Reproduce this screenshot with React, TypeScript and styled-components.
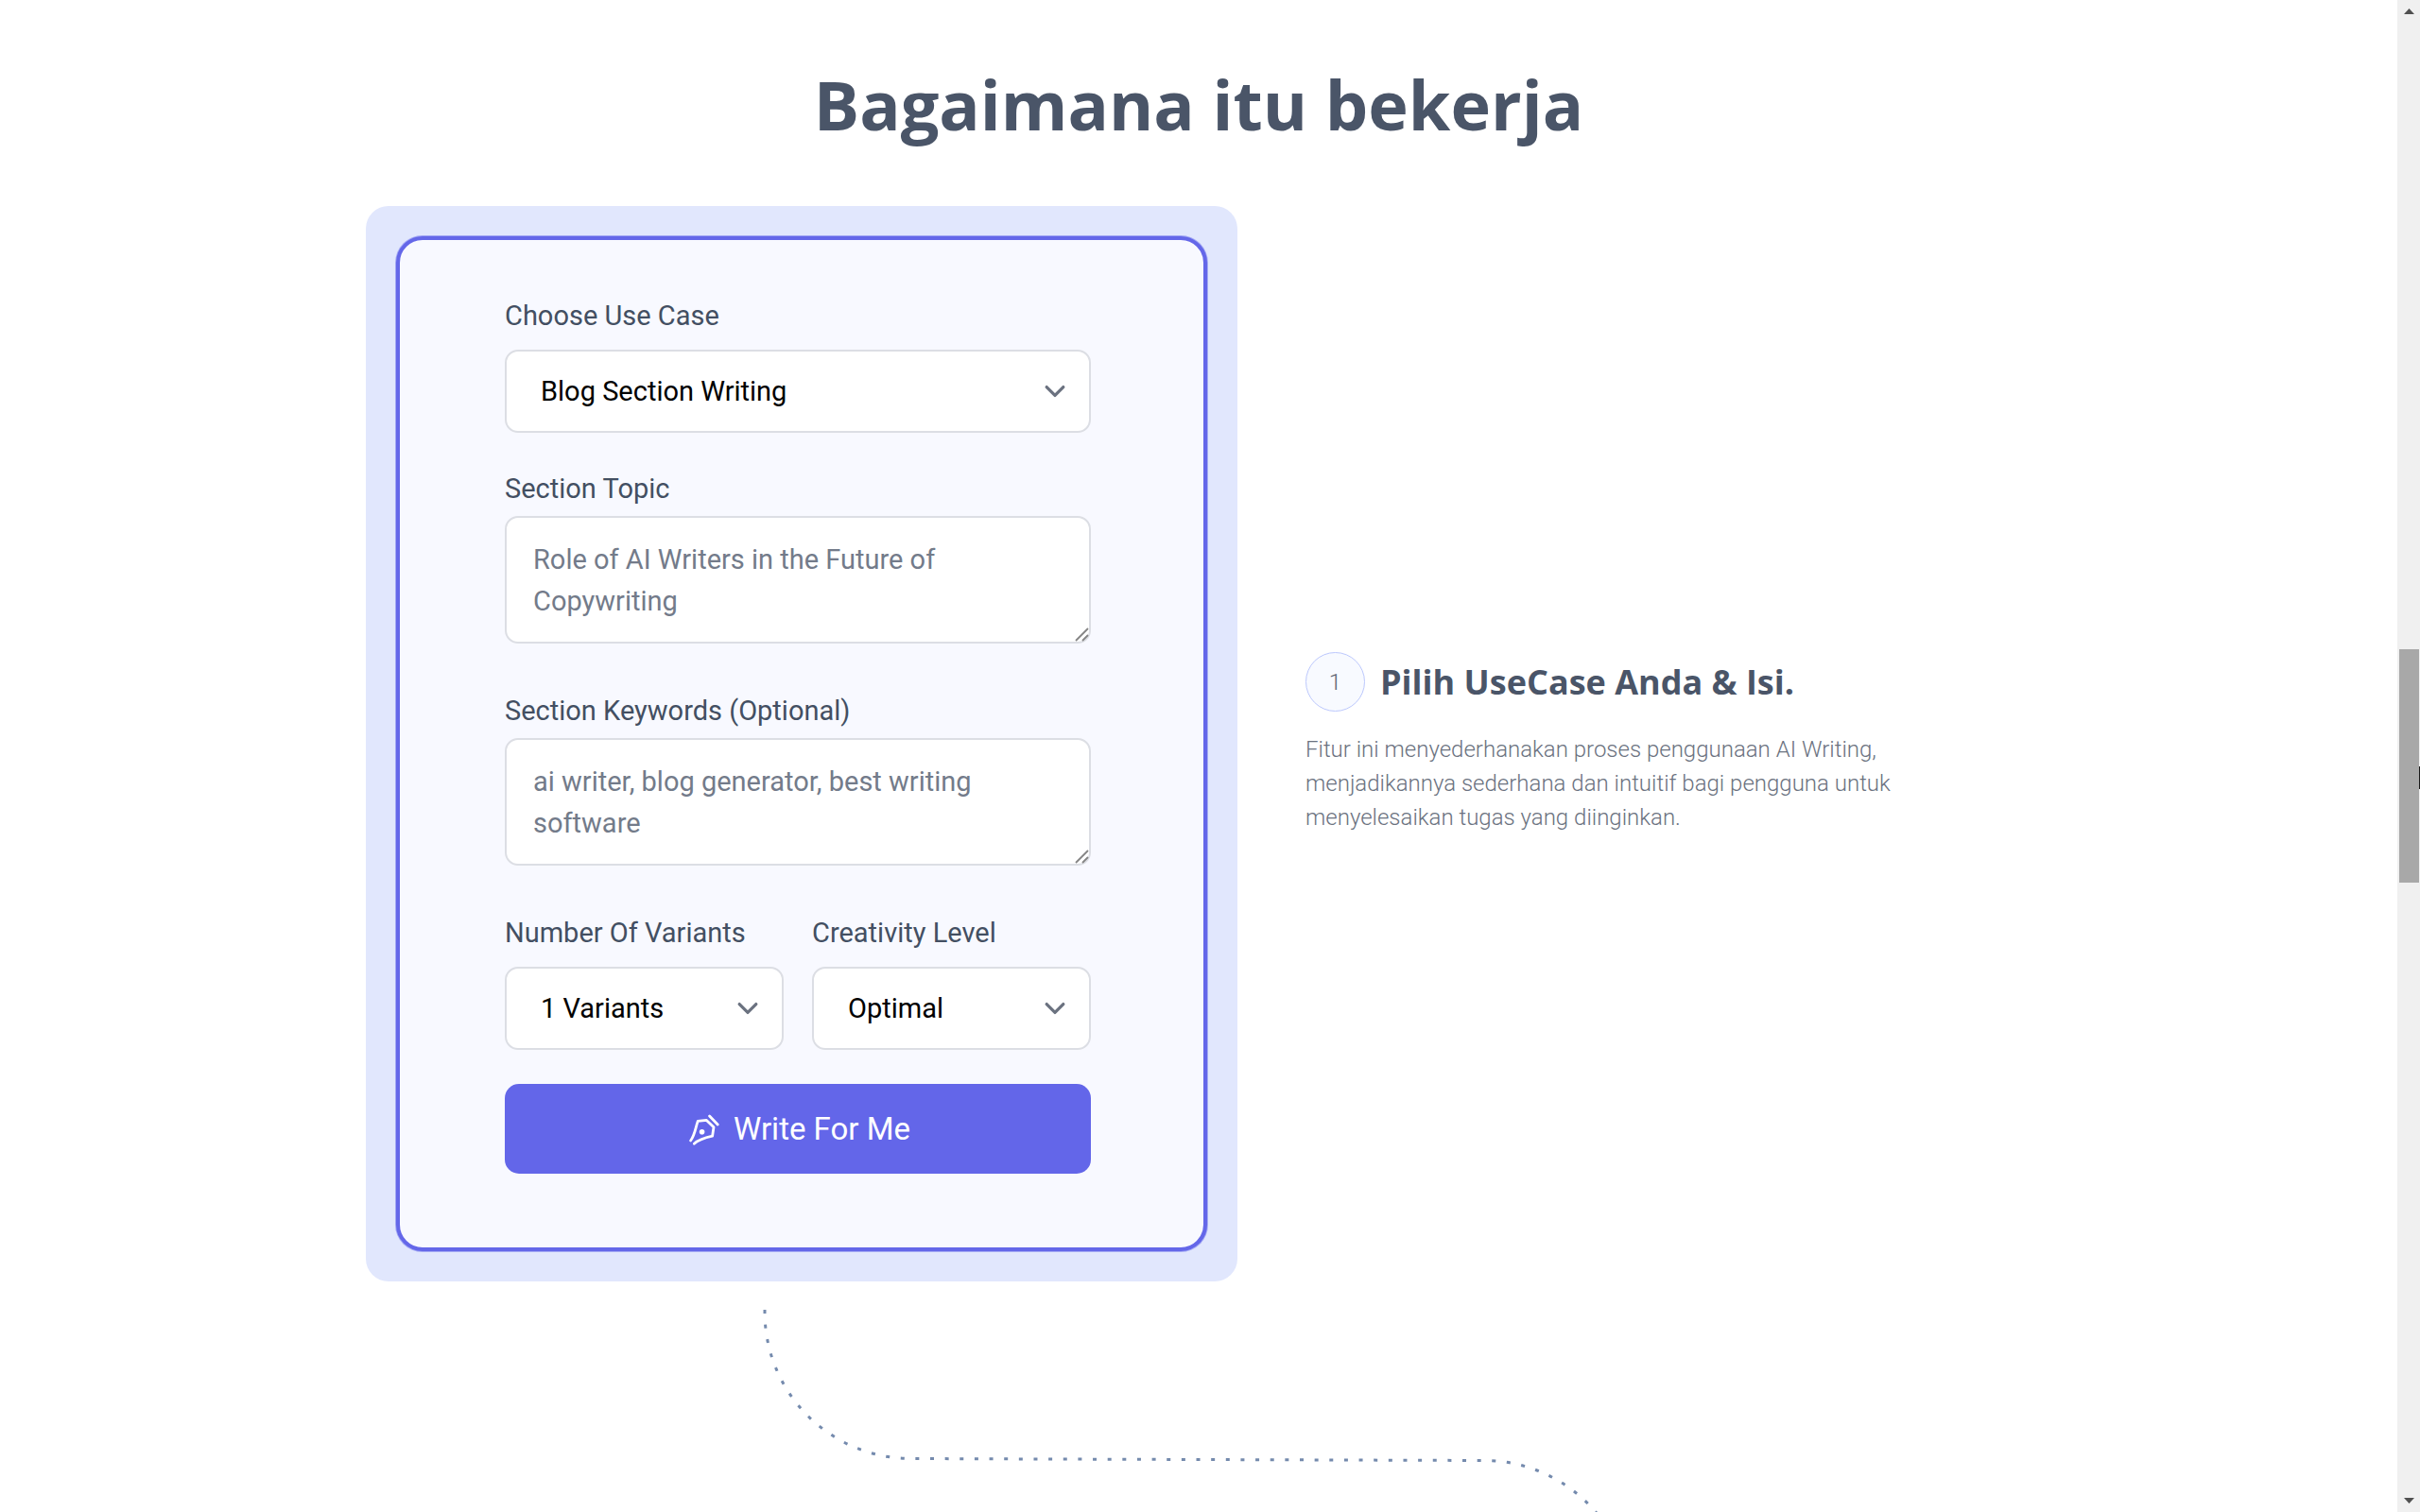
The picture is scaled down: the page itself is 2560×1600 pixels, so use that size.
import React from "react";
import styled, { createGlobalStyle } from "styled-components";

const GlobalStyle = createGlobalStyle`
  *, *::before, *::after { box-sizing: border-box; }
  body { margin: 0; background: #ffffff; }
  h1, h2, p { margin: 0; }
`;

const bodyFont = `Roboto, "Liberation Sans", sans-serif`;
const headingFont = `"Open Sans", "Noto Sans", sans-serif`;

const Shell = styled.div`
  display: flex;
  height: 100vh;
  overflow: hidden;
  font-family: ${bodyFont};
`;

const Content = styled.main`
  flex: 1;
  min-width: 0;
  overflow: hidden;
  padding: 64px 32px 0;
`;

const Section = styled.section`
  max-width: 1762px;
  margin: 0 auto;
`;

const Title = styled.h1`
  margin-bottom: 62px;
  font: 700 72px/92px ${headingFont};
  color: #4a5568;
  text-align: center;
`;

const Step = styled.div`
  display: grid;
  grid-template-columns: minmax(0, 922px) minmax(0, 1fr);
  column-gap: 72px;
  align-items: center;
`;

const Frame = styled.div`
  padding: 32px;
  border-radius: 24px;
  background: #e1e7fd;
`;

const Panel = styled.form`
  display: flex;
  flex-direction: column;
  padding: 60px 119px 78px 111px;
  border: 4px solid #6467e9;
  border-radius: 28px;
  box-shadow: 0 0 0 1px #a3a9f4;
  background: #f8f9ff;
`;

const Field = styled.div<{ $gap: number; $after: number }>`
  display: flex;
  flex-direction: column;
  flex: 1;
  min-width: 0;
  gap: ${(p) => p.$gap}px;
  margin-bottom: ${(p) => p.$after}px;
`;

const Label = styled.label`
  font-size: 29px;
  line-height: 40px;
  color: #434f62;
`;

const Control = styled.div`
  position: relative;
  display: flex;
`;

const Select = styled.select`
  appearance: none;
  width: 100%;
  height: 88px;
  padding: 0 60px 0 36px;
  border: 2px solid #dcdee4;
  border-radius: 14px;
  background: #ffffff;
  font: 400 29px/40px ${bodyFont};
  color: #000000;
`;

const Chevron = styled.svg`
  position: absolute;
  top: 22px;
  right: 16px;
  width: 44px;
  height: 44px;
  pointer-events: none;
`;

const TextArea = styled.textarea`
  display: block;
  width: 100%;
  height: 135px;
  padding: 22px 28px;
  border: 2px solid #dcdee4;
  border-radius: 14px;
  resize: none;
  overflow: hidden;
  background: #ffffff;
  font: 400 29px/44px ${bodyFont};
  color: #737b8a;
`;

const Grip = styled.svg`
  position: absolute;
  right: 1px;
  bottom: 1px;
  width: 16px;
  height: 16px;
  pointer-events: none;
`;

const FieldRow = styled.div`
  display: flex;
  gap: 30px;
`;

const Submit = styled.button`
  display: flex;
  align-items: center;
  justify-content: center;
  gap: 15px;
  height: 95px;
  padding: 0 0 0 4px;
  border: 0;
  border-radius: 15px;
  background: #6366e9;
  font: 400 33px/40px ${bodyFont};
  color: #ffffff;
`;

const Description = styled.div`
  display: flex;
  flex-direction: column;
  gap: 22px;
  padding-bottom: 1px;
`;

const StepHeading = styled.div`
  display: flex;
  align-items: center;
  gap: 16px;
`;

const StepNumber = styled.span`
  display: flex;
  align-items: center;
  justify-content: center;
  width: 63px;
  height: 63px;
  border: 1px solid #bcc8fd;
  border-radius: 50%;
  background: #f8faff;
  font-size: 24px;
  font-weight: 300;
  color: #5f6673;
`;

const StepTitle = styled.h2`
  font: 700 36px/48px ${headingFont};
  color: #4a5568;
`;

const StepText = styled.p`
  max-width: 640px;
  font-size: 24px;
  font-weight: 300;
  line-height: 36px;
  color: #6b7280;
`;

const Connector = styled.svg`
  display: block;
  width: 932px;
  height: 330px;
  margin: 28px 0 0 420px;
`;

const Scrollbar = styled.div`
  display: flex;
  flex-direction: column;
  flex: 0 0 24px;
  padding: 0 1px 0 2px;
  background: #f0f0f0;
`;

const ArrowBox = styled.div`
  flex: 0 0 24px;
  display: flex;
  align-items: center;
  justify-content: center;
`;

const TrackGap = styled.div<{ $share: number }>`
  flex: ${(p) => p.$share} 0 0;
`;

const Thumb = styled.div`
  position: relative;
  flex: 247 0 0;
  background: #a8a8a8;
`;

const Caret = styled.span`
  position: absolute;
  top: 50%;
  left: 100%;
  width: 1px;
  height: 24px;
  background: #1a1a1a;
`;

function ChevronIcon() {
  return (
    <Chevron viewBox="0 0 20 20" fill="none" stroke="#6b7280" strokeWidth="1.5" strokeLinecap="round" strokeLinejoin="round" aria-hidden="true">
      <path d="M6 8l4 4 4-4" />
    </Chevron>
  );
}

function PenIcon() {
  return (
    <svg width="32" height="34" viewBox="0 0 32 34" fill="none" stroke="#ffffff" strokeWidth="2.8" strokeLinecap="round" strokeLinejoin="round" aria-hidden="true">
      <path d="M1.6 29C6 23.5 6.6 16 9.2 8.4L18.4 7.4L26 14.8L24.6 24.2C17.4 25.8 10.6 27.4 5.4 32.2" />
      <path d="M21.6 3L30.2 12" />
      <circle cx="13.6" cy="19.8" r="2.8" fill="#ffffff" stroke="none" />
    </svg>
  );
}

function SelectField({ id, label, value, after }: { id: string; label: string; value: string; after: number }) {
  return (
    <Field $gap={16} $after={after}>
      <Label htmlFor={id}>{label}</Label>
      <Control>
        <Select id={id} defaultValue={value}>
          <option>{value}</option>
        </Select>
        <ChevronIcon />
      </Control>
    </Field>
  );
}

function TextField({ id, label, value }: { id: string; label: string; value: string }) {
  return (
    <Field $gap={9} $after={51}>
      <Label htmlFor={id}>{label}</Label>
      <Control>
        <TextArea id={id} defaultValue={value} spellCheck={false} />
        <Grip viewBox="0 0 16 16" fill="none" stroke="#858585" strokeWidth="1.8" aria-hidden="true">
          <path d="M1 14L14 1M8 14L14 8" />
        </Grip>
      </Control>
    </Field>
  );
}

export default function App() {
  return (
    <>
      <GlobalStyle />
      <Shell>
        <Content>
          <Section>
            <Title>Bagaimana itu bekerja</Title>
            <Step>
              <Frame>
                <Panel onSubmit={(e) => e.preventDefault()}>
                  <SelectField id="use-case" label="Choose Use Case" value="Blog Section Writing" after={39} />
                  <TextField id="topic" label="Section Topic" value="Role of AI Writers in the Future of Copywriting" />
                  <TextField id="keywords" label="Section Keywords (Optional)" value="ai writer, blog generator, best writing software" />
                  <FieldRow>
                    <SelectField id="variants" label="Number Of Variants" value="1 Variants" after={36} />
                    <SelectField id="creativity" label="Creativity Level" value="Optimal" after={36} />
                  </FieldRow>
                  <Submit type="submit">
                    <PenIcon />
                    Write For Me
                  </Submit>
                </Panel>
              </Frame>
              <Description>
                <StepHeading>
                  <StepNumber>1</StepNumber>
                  <StepTitle>Pilih UseCase Anda &amp; Isi.</StepTitle>
                </StepHeading>
                <StepText>
                  Fitur ini menyederhanakan proses penggunaan AI Writing, menjadikannya sederhana dan intuitif bagi
                  pengguna untuk menyelesaikan tugas yang diinginkan.
                </StepText>
              </Description>
            </Step>
            <Connector viewBox="0 0 932 330" fill="none" aria-hidden="true">
              <path
                d="M2 2V4A155 155 0 0 0 157 159.5L763 161.5A155 155 0 0 1 918 316.5"
                stroke="#748aad"
                strokeWidth="3"
                strokeDasharray="4 11.64"
              />
            </Connector>
          </Section>
        </Content>
        <Scrollbar aria-hidden="true">
          <ArrowBox>
            <svg width="11" height="6" viewBox="0 0 11 6"><path d="M0 6L5.5 0L11 6Z" fill="#505050" /></svg>
          </ArrowBox>
          <TrackGap $share={663} />
          <Thumb>
            <Caret />
          </Thumb>
          <TrackGap $share={642} />
          <ArrowBox>
            <svg width="11" height="6" viewBox="0 0 11 6"><path d="M0 0L5.5 6L11 0Z" fill="#505050" /></svg>
          </ArrowBox>
        </Scrollbar>
      </Shell>
    </>
  );
}
